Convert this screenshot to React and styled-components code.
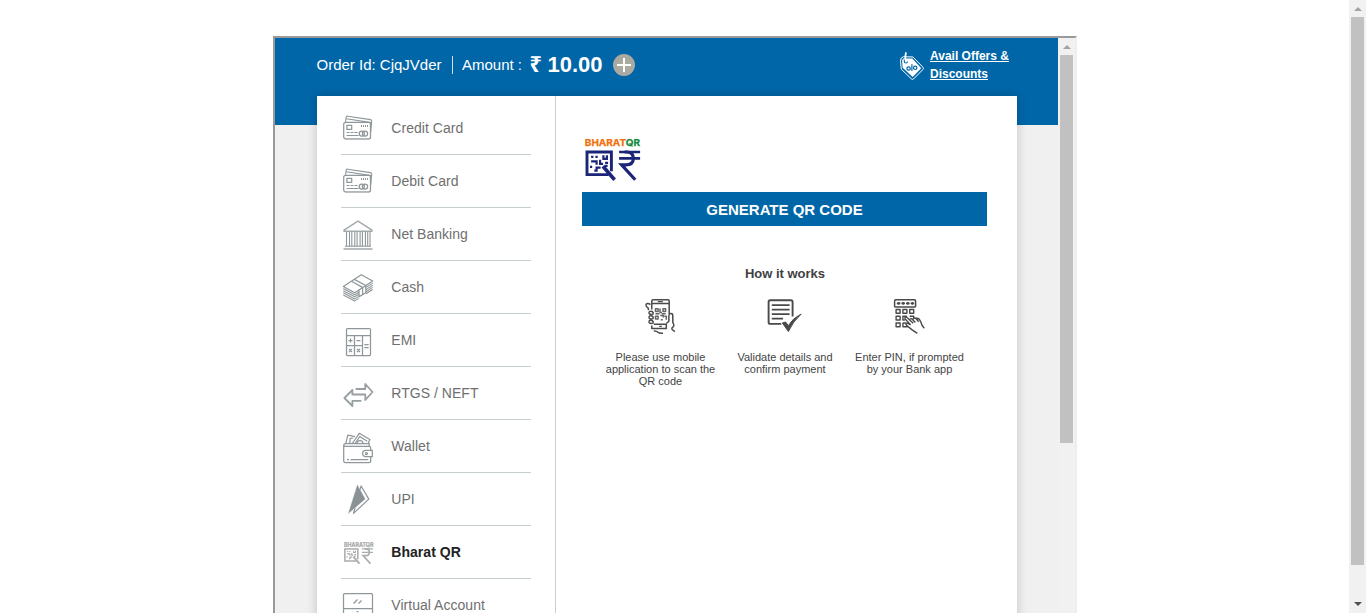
import React from 'react';
import styled, { createGlobalStyle } from 'styled-components';

const Global = createGlobalStyle`
  * { box-sizing: border-box; }
  body { margin: 0; background: #fff; overflow: hidden; font-family: "Liberation Sans", Arial, sans-serif; }
  svg { display: block; flex: none; }
`;

const Page = styled.div`
  display: flex;
  height: 613px;
  overflow: hidden;
`;
const Main = styled.main`
  flex: 1;
  padding: 36px 0 0 273px;
  overflow: hidden;
`;
const Frame = styled.section`
  display: flex;
  width: 804px;
  height: 700px;
  border: 2px solid;
  border-color: #9a9a9a #eee #eee #9a9a9a;
`;
const Content = styled.div`
  width: 783px;
  background: #f0f0f0;
`;
const ScrollTrack = styled.div`
  width: 17px;
  flex: none;
  display: flex;
  flex-direction: column;
  align-items: center;
  background: #f1f1f1;
`;
const ScrollArrow = styled.div`
  height: 17px;
  display: flex;
  align-items: center;
`;
const Triangle = styled.i`
  border: 4px solid transparent;
  ${p => p.$down
    ? 'border-top-color: #505050; border-bottom: 0; margin-top: -1px;'
    : 'border-bottom-color: #a3a3a3; border-top: 0; margin-top: 1px;'}
`;
const Thumb = styled.div`
  width: 13px;
  height: ${p => p.$h}px;
  background: #c1c1c1;
`;
const Grow = styled.div`
  flex: 1;
`;

const Header = styled.header`
  height: 87px;
  background: #0066a8;
  color: #fff;
  display: flex;
  align-items: flex-start;
  justify-content: space-between;
  padding: 9px 47px 0 41px;
`;
const Order = styled.div`
  display: flex;
  align-items: center;
  height: 36px;
  font-size: 15px;
  white-space: nowrap;
`;
const OrderId = styled.span`
  width: 136px;
  padding: 0 0 1px 0.5px;
`;
const Rule = styled.i`
  width: 1px;
  height: 18px;
  background: #d5dde2;
  margin-right: 9px;
`;
const AmountLabel = styled.span`
  width: 67px;
  padding-bottom: 1px;
`;
const Rupee = styled.b`
  width: 18.5px;
  padding: 0 0 3px 0.5px;
  font: bold 21.5px "Noto Sans", sans-serif;
`;
const Amount = styled.b`
  width: 65.5px;
  font-size: 22px;
  padding-bottom: 1px;
`;
const Offers = styled.div`
  display: flex;
  width: 111px;
  gap: 4px;
`;
const TagHolder = styled.div`
  padding-top: 5px;
  margin-left: -1px;
`;
const OffersLink = styled.a`
  font-size: 12px;
  font-weight: bold;
  line-height: 18px;
  text-decoration: underline;
  white-space: nowrap;
`;

const Card = styled.div`
  display: flex;
  width: 700px;
  height: 700px;
  margin: -29px 0 0 42px;
  background: #fff;
  box-shadow: 0 0 10px rgba(0, 0, 0, 0.2);
`;
const Menu = styled.nav`
  width: 239px;
  border-right: 1px solid #ccc;
  padding: 6px 24px 0;
`;
const MenuItem = styled.div`
  display: flex;
  align-items: center;
  gap: 16.3px;
  height: 53px;
  border-bottom: 1px solid #c6ced1;
  font-size: 14px;
  letter-spacing: 0.03px;
  font-weight: ${p => (p.$active ? 'bold' : 'normal')};
  color: ${p => (p.$active ? '#222' : '#6f6f6f')};
  white-space: nowrap;
`;
const Panel = styled.div`
  flex: 1;
  padding: 41px 30px 0 26px;
`;
const Generate = styled.div`
  height: 34px;
  margin-top: 9px;
  background: #0066a8;
  color: #fff;
  font-size: 15px;
  font-weight: bold;
  line-height: 35px;
  text-align: center;
`;
const HowTitle = styled.h2`
  margin: 40px 0 15px 1px;
  font-size: 13px;
  line-height: 16px;
  text-align: center;
  color: #414141;
`;
const Steps = styled.div`
  display: flex;
  justify-content: center;
  margin-left: 1px;
`;
const Step = styled.div`
  width: 124.5px;
  display: flex;
  flex-direction: column;
  align-items: center;
`;
const StepText = styled.p`
  margin: 14px 0 0;
  font-size: 11px;
  line-height: 12px;
  text-align: center;
  color: #444;
  white-space: nowrap;
`;

const Icon = ({ children }) => (
  <svg width="34" height="40" viewBox="0 0 34 40" fill="none" stroke="#8f979a" strokeWidth="1.25" strokeLinejoin="round">
    {children}
  </svg>
);

const CardsIcon = () => (
  <Icon>
    <path d="M4.5 14 5.2 9.2q.3-1.2 1.6-1L29.4 11.6q1.5.3 1.3 1.7L29.7 24M5.5 10.8l24.8 3.8" strokeWidth="1.1" />
    <rect x="2.7" y="14.3" width="26.8" height="16.6" rx="2" fill="#fff" />
    <path d="M4 31h24" stroke="#b4babd" strokeWidth="1.5" />
    <rect x="5.9" y="17.4" width="4.8" height="4" />
    <path d="M20.5 17v2m2-2v2m2-2v2m2-2v2M5.5 24.5h3m1 0h3m1 0h3M5.5 27.5h12" strokeWidth="1" />
    <circle cx="20.8" cy="25.6" r="2.6" />
    <circle cx="24" cy="25.6" r="2.6" />
  </Icon>
);

const BankIcon = () => (
  <Icon>
    <path d="M3 17.2h28v-1L17 7.2 3 16.2z" stroke="#a2a9ac" strokeWidth="1.4" />
    <path d="M5.5 18v14m3-14v14m2.3-14v14m3-14v14m2.3-14v14m3-14v14m2.3-14v14m3-14v14m2.3-14v14m2.3-14v14" strokeWidth="1.1" />
    <path d="M4 32.2h26" strokeWidth="1.1" />
    <path d="M2.5 35h29" strokeWidth="1.8" stroke="#afb6b8" />
  </Icon>
);

const CashIcon = () => (
  <Icon>
    <path d="M20.3 7.8 31.7 14 13.7 25.7 2.3 19.5zM10.5 14.3 21.5 20.4M13.3 12.4 24.8 18.5" />
    <path d="m2.3 21.6 11.4 6.1 4.1-2.5M2.3 23.7l11.4 6.1 4.1-2.5M2.3 25.8l11.4 6.1 4.1-2.5M2.3 27.9l11.4 6 4.1-2.5M25 20.4l6.7-4.3M25 22.6l6.7-4.3M25 24.7l6.7-4.3M25 26.8l6.7-4.3" strokeWidth="1.1" />
    <path d="M18 22.7v7.1l3.6-2.2v-7.2M24.8 18.6v7.2l-3.2 1.8" />
  </Icon>
);

const CalcIcon = () => (
  <Icon>
    <rect x="5.5" y="8.5" width="24" height="27" rx="1" />
    <path d="M5.5 15.5h24M13.5 15.5v20M21.5 15.5v20M5.5 25.5h16" />
    <path d="M7.5 20.5h4m-2-2v4m6-2h4m3.8 4h4.4m-4.4 3h4.4M8 29l3 3m0-3-3 3m8 0 3-3m-3 0 3 3" />
  </Icon>
);

const TransferIcon = () => (
  <Icon>
    <path d="M14.7 16h9.6v-5l7.2 8-7.2 8v-5.5H14M20.4 27.8h-9V33l-8-8 8-8v4.5H17" strokeWidth="1.8" stroke="#989fa2" />
  </Icon>
);

const WalletIcon = () => (
  <Icon>
    <path d="M4.8 17.7 6.8 9.1 14 10.6M8.8 17.5l.4-5.2 3-.3M11.3 17.5l7-10.2 10.5 6.2-1.6 4M14 17.5l4.8-7 7.4 4.7" />
    <path d="M16 17.5a3 3 0 0 1 6 0" />
    <path d="M4.5 17.7q-1.8 0-1.8 1.6v15.6q0 1.7 1.7 1.7h23.5q1.8 0 1.8-1.7v-4.1M2.7 18.8q.3 1.6 2 1.6h23.5q1.5 0 1.5 1.5v2.4M28.2 20.4v-2.7H4.5M6 33.5h2m1.5 0h17.7" />
    <path d="M24.7 24.4h6.6v6.3h-6.6a3.1 3.1 0 0 1 0-6.3z" fill="#fff" />
    <circle cx="25.4" cy="27.5" r="1" />
  </Icon>
);

const UpiIcon = () => (
  <Icon>
    <path d="M20.1 7 27.8 20.1 12.5 34.4z" />
    <path d="M16.3 5.2 24.5 20.1 6.8 35.3z" fill="#8b9296" stroke="#fff" strokeWidth=".4" />
  </Icon>
);

const QrShapes = () => (
  <g fill="none">
    <path d="M26.8 33.5V14.2H2.4v22.6H24" strokeWidth="2.9" />
    <path d="M18.3 28.5 30 42" strokeWidth="3.6" />
    <path d="M6.5 19h2.3m2 0h2.3m5.7-1.5v3.5h3.5v-3.5M6.5 23.5h5.5v3.5M15.5 22v4h3m2-1h3M6.5 28v2.3m3.2 2.5h2.3v-3h4M20 28h3" strokeWidth="2.2" />
    <path d="M34.5 14.2h21M34.5 20.6h21" strokeWidth="2.6" />
    <path d="M40 14.2h2q6.7 0 6.7 6.4 0 6.4-7.7 6.4H37L50.6 42" strokeWidth="3.2" />
  </g>
);

const LogoText = styled.text`
  font: bold ${p => p.$size}px Inter, "Open Sans", sans-serif;
`;

const SmallQrIcon = () => (
  <svg width="34" height="40" viewBox="0 0 34 40" stroke="#aaacad">
    <LogoText $size={5.5} x="3" y="15" textLength="29.5" lengthAdjust="spacingAndGlyphs" fill="#a5a7a8" stroke="#a5a7a8" strokeWidth=".2">BHARATQR</LogoText>
    <g transform="translate(2.6 9.4) scale(.53)"><QrShapes /></g>
  </svg>
);

const VirtualIcon = () => (
  <Icon>
    <rect x="2.5" y="8.5" width="29" height="28" rx="1.3" />
    <path d="M2.5 23.5h29M12.5 18.5l4-4m1 4 3-3M15.5 26.5h2" />
  </Icon>
);

const BharatLogo = () => (
  <svg width="62" height="46" viewBox="0 0 62 46" stroke="#1c2478">
    <LogoText $size={9.5} x="2.8" y="9" textLength="55.3" lengthAdjust="spacingAndGlyphs" fill="#f3700f" stroke="#f3700f" strokeWidth=".25">
      BHARAT<tspan fill="#128a3c" stroke="#128a3c">QR</tspan>
    </LogoText>
    <g transform="translate(2.6 .8)"><QrShapes /></g>
  </svg>
);

const TagIcon = () => (
  <svg width="27" height="32" viewBox="0 0 27 32" fill="none">
    <path d="M1.5 10q-.3-3.7 3-4.5L14 5.8l9.8 10.1q1.2 1.3 0 2.5l-9 9.2q-1.3 1.1-2.5 0L2.3 18z" stroke="#fff" transform="translate(0 -.8)" />
    <path d="M3.1 9.5q-.3-2.7 2-3.1l8.2.2 8.9 9.6-8.5 8.9-10-9.4z" fill="#fff" />
    <path d="M5.3 7.3v2.2q0 1.5 1.6 1.5t1.6-1.5" stroke="#0066a8" strokeWidth="1.1" />
    <path d="M6.3 8c0-4 .2-6.6 1-7.6" stroke="#fff" strokeWidth="1.8" />
    <g stroke="#0066a8" strokeWidth="1.2">
      <circle cx="9.6" cy="16.5" r="1.7" />
      <path d="M12.9 12.3v6.7" />
      <circle cx="16.2" cy="15.8" r="1.7" />
    </g>
  </svg>
);

const PlusIcon = () => (
  <svg width="22" height="22" viewBox="0 0 22 22">
    <circle cx="11" cy="11" r="11" fill="#aaa9a2" />
    <path d="M11 4v14M4 11h14" stroke="#fff" strokeWidth="2" />
  </svg>
);

const StepIcon = ({ children }) => (
  <svg width="38" height="40" viewBox="0.7 0 38 40" fill="none" stroke="#4a4a4a" strokeWidth="1.5" strokeLinejoin="round">
    {children}
  </svg>
);

const PhoneIcon = () => (
  <StepIcon>
    <path d="M10.5 12.5V4q0-1.2 1.2-1.2h15q1.2 0 1.2 1.2v13M10.5 6.6h17.4M12.5 27.2h12.5M25 27v4.5H10.5v-3" />
    <path d="M16.5 4.7h5M18 29.4h2.5" strokeWidth="1.2" />
    <g strokeWidth="1.5" stroke="#666">
      <path d="M14.2 11.8h2.6v2.6h-2.6zm7.5 0h2.6v2.6h-2.6zm-7.5 7.5h2.6v2.6h-2.6z" />
      <path d="M18.7 11.5v4h2m-6.5 1.3h4m2.2 0h4M19 18.5h3v2m-2.5 2.2h2m1.5-3.5h2v3.5" />
    </g>
    <path d="M9.2 7.5Q5.4 5.3 4.7 8q-.3 1.4 2.4 3.4v1.8M10.8 14.5q-3.6-.8-3 1.8.9 1.8 4 .8.6-1.7-1-2.6zM10.8 19q-3.7-.8-3 1.8.9 1.8 4 .8.6-1.7-1-2.6zM10.8 23.5q-3.7-.8-3 1.8.9 1.8 4 .8.6-1.7-1-2.6z" />
    <path d="M25 26.5l2.6-2.3V18.5q.3-2 2.1-1.9 1.9.1 1.8 2.2v6.5q1.7 2.7.7 4.3-2.3 1.5-1.4 2.7.5.8 2.8 2.3M12.5 34q2.5-.3 4.2 1.3 1.4 1.3 5 .9" />
  </StepIcon>
);

const DocIcon = () => (
  <StepIcon>
    <path d="M16 26.9H4.9q-1.6 0-1.6-1.6V4.9q0-1.6 1.6-1.6h20.8q1.6 0 1.6 1.6v14.5" strokeWidth="1.9" />
    <path d="M6.5 8.2h17.8M6.5 12.7h17.8M6.5 17.2h17.8M6.5 21.7h11.3" strokeWidth="1.8" />
    <path d="m17 26 3.3-1 2.7 3.7Q27.5 21 35.9 17 27.5 24.5 23.1 34.5z" fill="#4a4a4a" strokeWidth="1" />
  </StepIcon>
);

const KeypadIcon = () => (
  <StepIcon>
    <rect x="4.3" y="2.7" width="21" height="7.4" rx="1.2" strokeWidth="1.5" />
    <path d="M6.5 6.4h3.6m1 0h3.6m1 0h3.6m1 0h3.6M8.3 5v2.8m4.6-2.8v2.8m4.6-2.8v2.8m4.6-2.8v2.8" strokeWidth="1.6" />
    <path d="M5.8 12.5h4v3.8h-4zm6.8 0h4v3.8h-4zm6.8 0h4v3.8h-4zM5.8 19.2h4V23h-4zm0 6.8h4v3.8h-4zM16.5 19.2h-3.9V23h2m4.8-3.8h4v2M12.6 26h3.5m-3.5 0v3.8h5" strokeWidth="1.4" />
    <path d="m14.2 21.2 1.6-1.4 7.2 6.4M14.2 21.2l5.8 6.3-3.1-1.3q-1.8.4-1 1.8l5.6 4.6 5.5 3.8M19.3 22.8q1.2-2.2 2.9-.4l2.9 3M22.8 22q1.6-1.9 3.1-.2l2.4 3M25.9 21.3q3-.7 4.6 3.7.7 3.2 3.5 6.2" strokeWidth="1.4" />
  </StepIcon>
);

const items = [
  ['Credit Card', CardsIcon],
  ['Debit Card', CardsIcon],
  ['Net Banking', BankIcon],
  ['Cash', CashIcon],
  ['EMI', CalcIcon],
  ['RTGS / NEFT', TransferIcon],
  ['Wallet', WalletIcon],
  ['UPI', UpiIcon],
  ['Bharat QR', SmallQrIcon],
  ['Virtual Account', VirtualIcon],
];

function Scrollbar({ thumb, bottom }) {
  return (
    <ScrollTrack>
      <ScrollArrow><Triangle /></ScrollArrow>
      <Thumb $h={thumb} />
      <Grow />
      {bottom && <ScrollArrow><Triangle $down /></ScrollArrow>}
    </ScrollTrack>
  );
}

export default function App() {
  return (
    <Page>
      <Global />
      <Main>
        <Frame>
          <Content>
            <Header>
              <Order>
                <OrderId>Order Id: CjqJVder</OrderId>
                <Rule />
                <AmountLabel>Amount :</AmountLabel>
                <Rupee>₹</Rupee>
                <Amount>10.00</Amount>
                <PlusIcon />
              </Order>
              <Offers>
                <TagHolder><TagIcon /></TagHolder>
                <OffersLink>Avail Offers &amp;<br />Discounts</OffersLink>
              </Offers>
            </Header>
            <Card>
              <Menu>
                {items.map(([label, Glyph]) => (
                  <MenuItem key={label} $active={label === 'Bharat QR'}>
                    <Glyph />
                    {label}
                  </MenuItem>
                ))}
              </Menu>
              <Panel>
                <BharatLogo />
                <Generate>GENERATE QR CODE</Generate>
                <HowTitle>How it works</HowTitle>
                <Steps>
                  <Step><PhoneIcon /><StepText>Please use mobile<br />application to scan the<br />QR code</StepText></Step>
                  <Step><DocIcon /><StepText>Validate details and<br />confirm payment</StepText></Step>
                  <Step><KeypadIcon /><StepText>Enter PIN, if prompted<br />by your Bank app</StepText></Step>
                </Steps>
              </Panel>
            </Card>
          </Content>
          <Scrollbar thumb={388} />
        </Frame>
      </Main>
      <Scrollbar thumb={548} bottom />
    </Page>
  );
}
